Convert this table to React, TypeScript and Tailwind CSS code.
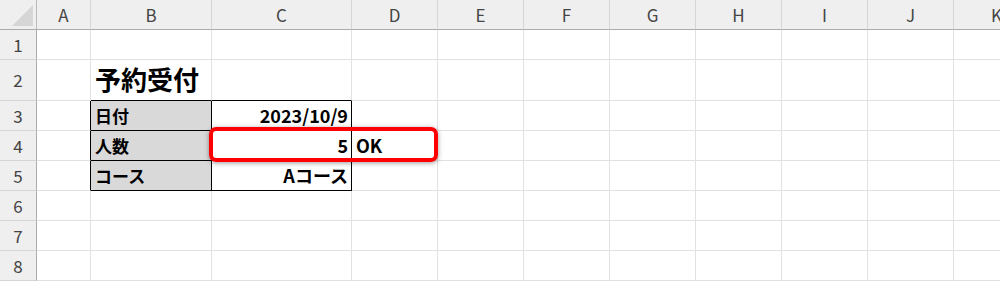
import React from 'react'

const cols = ['A', 'B', 'C', 'D', 'E', 'F', 'G', 'H', 'I', 'J', 'K']
const rowHeights = ['h-[30px]', 'h-[41px]', 'h-[30px]', 'h-[30px]', 'h-[30px]', 'h-[30px]', 'h-[30px]', 'h-[30px]']

type CellSpec = {
  text?: string
  align?: 'left' | 'right'
  gray?: boolean
  title?: boolean
  value?: boolean
  r?: boolean
  b?: boolean
}

// sheet contents keyed by "row-col"
const cells: Record<string, CellSpec> = {
  '2-B': { text: '予約受付', title: true, b: true },
  '2-C': { b: true },
  '3-A': { r: true },
  '3-B': { text: '日付', gray: true, r: true, b: true },
  '3-C': { text: '2023/10/9', align: 'right', value: true, r: true, b: true },
  '4-A': { r: true },
  '4-B': { text: '人数', gray: true, r: true, b: true },
  '4-C': { text: '5', align: 'right', value: true, r: true, b: true },
  '4-D': { text: 'OK', value: true },
  '5-A': { r: true },
  '5-B': { text: 'コース', gray: true, r: true, b: true },
  '5-C': { text: 'Aコース', align: 'right', value: true, r: true, b: true },
}

const Cell = ({ row, col }: { row: number; col: string }) => {
  const c = cells[`${row}-${col}`] || {}
  return (
    <div
      className={[
        'flex items-center border-r border-b overflow-hidden whitespace-nowrap',
        c.r ? 'border-r-black' : 'border-r-[#e1e1e1]',
        c.b ? 'border-b-black' : 'border-b-[#e1e1e1]',
        c.gray ? 'bg-[#d9d9d9]' : 'bg-white',
        c.align === 'right' ? 'justify-end pr-[3px]' : 'justify-start pl-[4px]',
        c.title ? 'text-[26px] pb-[3px]' : c.value ? 'text-[18px]' : 'text-[17px]',
        'font-bold text-black',
      ].join(' ')}
    >
      {c.text}
    </div>
  )
}

const App = () => {
  return (
    <div
      className="relative w-[1000px] h-[281px] overflow-hidden bg-white"
      style={{ fontFamily: '"Noto Sans CJK JP", "Noto Sans", sans-serif' }}
    >
      <div className="grid grid-cols-[37px_54px_121px_140px_86px_86px_86px_86px_86px_86px_86px_86px]">
        {/* corner + column headings */}
        <div className="relative h-[30px] bg-[#efefef] border-r border-b border-r-[#b9b9b9] border-b-[#ababab]">
          <svg className="absolute left-[12px] top-[5px]" width="21" height="21" viewBox="0 0 21 21">
            <polygon points="21,0 21,21 0,21" fill="#d6d6d6" />
          </svg>
        </div>
        {cols.map((col) => (
          <div
            key={col}
            className="h-[30px] flex items-center justify-center bg-[#efefef] border-r border-b border-r-[#d5d5d5] border-b-[#ababab] text-[17px] text-[#444]"
          >
            {col}
          </div>
        ))}

        {rowHeights.map((h, i) => {
          const row = i + 1
          return (
            <React.Fragment key={row}>
              <div
                className={`${h} flex items-center justify-center bg-[#efefef] border-r border-b border-r-[#ababab] border-b-[#d5d5d5] text-[17px] text-[#444]`}
              >
                {row}
              </div>
              {cols.map((col) => (
                <div key={col} className={`${h} grid`}>
                  <Cell row={row} col={col} />
                </div>
              ))}
            </React.Fragment>
          )
        })}
      </div>

      {/* highlight round C4:D4 */}
      <div className="absolute left-[209px] top-[127px] w-[229px] h-[35px] border-4 border-[#ff0000] rounded-[7px] shadow-[0_1px_5px_rgba(0,0,0,0.4)]" />
    </div>
  )
}

export default App
